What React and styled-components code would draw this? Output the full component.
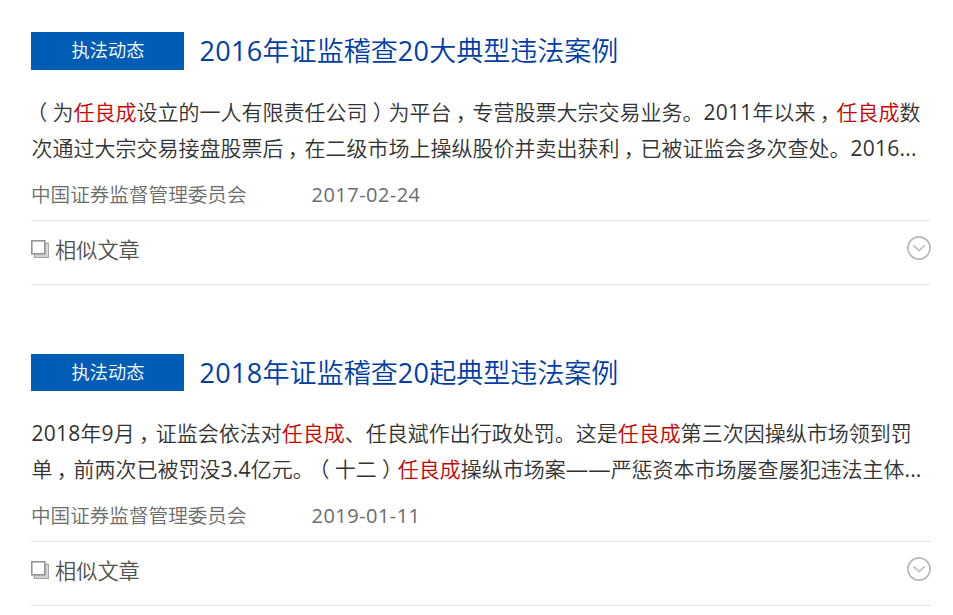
import React from "react";
import styled, { createGlobalStyle } from "styled-components";

const GlobalStyle = createGlobalStyle`
  * { box-sizing: border-box; }
  body {
    margin: 0;
    background: #fff;
    color: #333;
    font-family: "Open Sans", "Noto Sans CJK SC DemiLight", "Noto Sans CJK SC", sans-serif;
    overflow: hidden;
  }
`;

const Results = styled.main`
  width: 953px;
  height: 615px;
  padding: 32.4px 22px 0 31px;
  overflow: hidden;
`;

const Article = styled.article`
  height: 321.3px;
`;

const Header = styled.header`
  display: flex;
  height: 37.2px;
`;

const Badge = styled.span`
  width: 153px;
  height: 37.2px;
  padding-left: 1px;
  background: #005db6;
  color: #fff;
  font-size: 18.2px;
  line-height: 36px;
  text-align: center;
`;

const Title = styled.h2`
  margin: 0 0 0 15.5px;
  color: #003ea6;
  font-size: 27.03px;
  font-weight: 400;
  line-height: 38px;
  white-space: nowrap;
`;

const Summary = styled.div`
  margin-top: 24.4px;
  font-size: 21px;
`;

const Line = styled.p`
  margin: 0;
  height: 36px;
  padding-left: 0.4px;
  line-height: 36px;
  white-space: nowrap;
`;

const Mark = styled.em`
  color: #c90000;
  font-style: normal;
`;

const Num = styled.span`
  letter-spacing: 0.012em;
`;

const Dash = styled.span`
  font-size: 1.07em;
  line-height: 1;
`;

const Punct = styled.span`
  display: inline-block;
  width: 1em;
  padding-right: ${(p) => (p.$comma ? 0.08 : 0)}em;
  font-feature-settings: "halt";
  text-align: center;
`;

const Meta = styled.div`
  display: flex;
  height: 55px;
  padding-top: 2px;
  color: #6c6c6c;
  font-size: 19.6px;
  line-height: 54px;
  white-space: nowrap;
  border-bottom: 1px solid #e4e4e4;
`;

const Source = styled.span`
  width: 280.6px;
`;

const PublishDate = styled.time`
  font-size: 20px;
  letter-spacing: 0.45px;
`;

const Similar = styled.div`
  display: flex;
  align-items: center;
  height: 64px;
  padding-bottom: 9px;
  border-bottom: 1px solid #e4e4e4;
  color: #505050;
  font-size: 21.2px;
`;

const SimilarLabel = styled.span`
  flex: 1;
  margin-left: 6px;
  line-height: 32px;
  padding-top: 4px;
`;

const StackSvg = styled.svg`
  margin-top: 3px;
`;

const StackIcon = () => (
  <StackSvg width="18" height="19" viewBox="0 0 18 19" fill="none">
    <path d="M14 3.5H17.3V17.3H3.5V14" stroke="#a5a5a5" strokeWidth="1.4" />
    <path d="M14.9 4.5V14.9H4.5" stroke="#cfcfcf" strokeWidth="2" />
    <rect x=".8" y=".8" width="13" height="13" stroke="#8f8f8f" strokeWidth="1.5" />
  </StackSvg>
);

const ExpandIcon = () => (
  <svg width="24" height="24" viewBox="0 0 24 24" fill="none">
    <circle cx="12" cy="12" r="11.1" stroke="#b9b9b9" strokeWidth="1.7" />
    <path d="M6.3 9.3L12 14.5L17.7 9.3" stroke="#c4c4c4" strokeWidth="1.8" />
  </svg>
);

const withNumbers = (text) =>
  text.split(/([0-9][0-9.-]*|[，（）]|——)/).map((part, i) => {
    if (/^[，（）]$/.test(part)) return <Punct key={i} $comma={part === "，"}>{part}</Punct>;
    if (part === "——") return <Dash key={i}>{part}</Dash>;
    return /^[0-9]/.test(part) ? <Num key={i}>{part}</Num> : part;
  });

const highlight = (text) =>
  text.split(/(任良成)/).map((part, i) =>
    part === "任良成" ? (
      <Mark key={i}>{part}</Mark>
    ) : (
      <React.Fragment key={i}>{withNumbers(part)}</React.Fragment>
    )
  );

const articles = [
  {
    title: "2016年证监稽查20大典型违法案例",
    lines: [
      "（为任良成设立的一人有限责任公司）为平台，专营股票大宗交易业务。2011年以来，任良成数",
      "次通过大宗交易接盘股票后，在二级市场上操纵股价并卖出获利，已被证监会多次查处。2016...",
    ],
    date: "2017-02-24",
  },
  {
    title: "2018年证监稽查20起典型违法案例",
    lines: [
      "2018年9月，证监会依法对任良成、任良斌作出行政处罚。这是任良成第三次因操纵市场领到罚",
      "单，前两次已被罚没3.4亿元。（十二）任良成操纵市场案——严惩资本市场屡查屡犯违法主体...",
    ],
    date: "2019-01-11",
  },
];

export default function App() {
  return (
    <>
      <GlobalStyle />
      <Results>
        {articles.map((a) => (
          <Article key={a.title}>
            <Header>
              <Badge>执法动态</Badge>
              <Title>{withNumbers(a.title)}</Title>
            </Header>
            <Summary>
              {a.lines.map((line) => (
                <Line key={line}>{highlight(line)}</Line>
              ))}
            </Summary>
            <Meta>
              <Source>中国证券监督管理委员会</Source>
              <PublishDate>{a.date}</PublishDate>
            </Meta>
            <Similar>
              <StackIcon />
              <SimilarLabel>相似文章</SimilarLabel>
              <ExpandIcon />
            </Similar>
          </Article>
        ))}
      </Results>
    </>
  );
}
